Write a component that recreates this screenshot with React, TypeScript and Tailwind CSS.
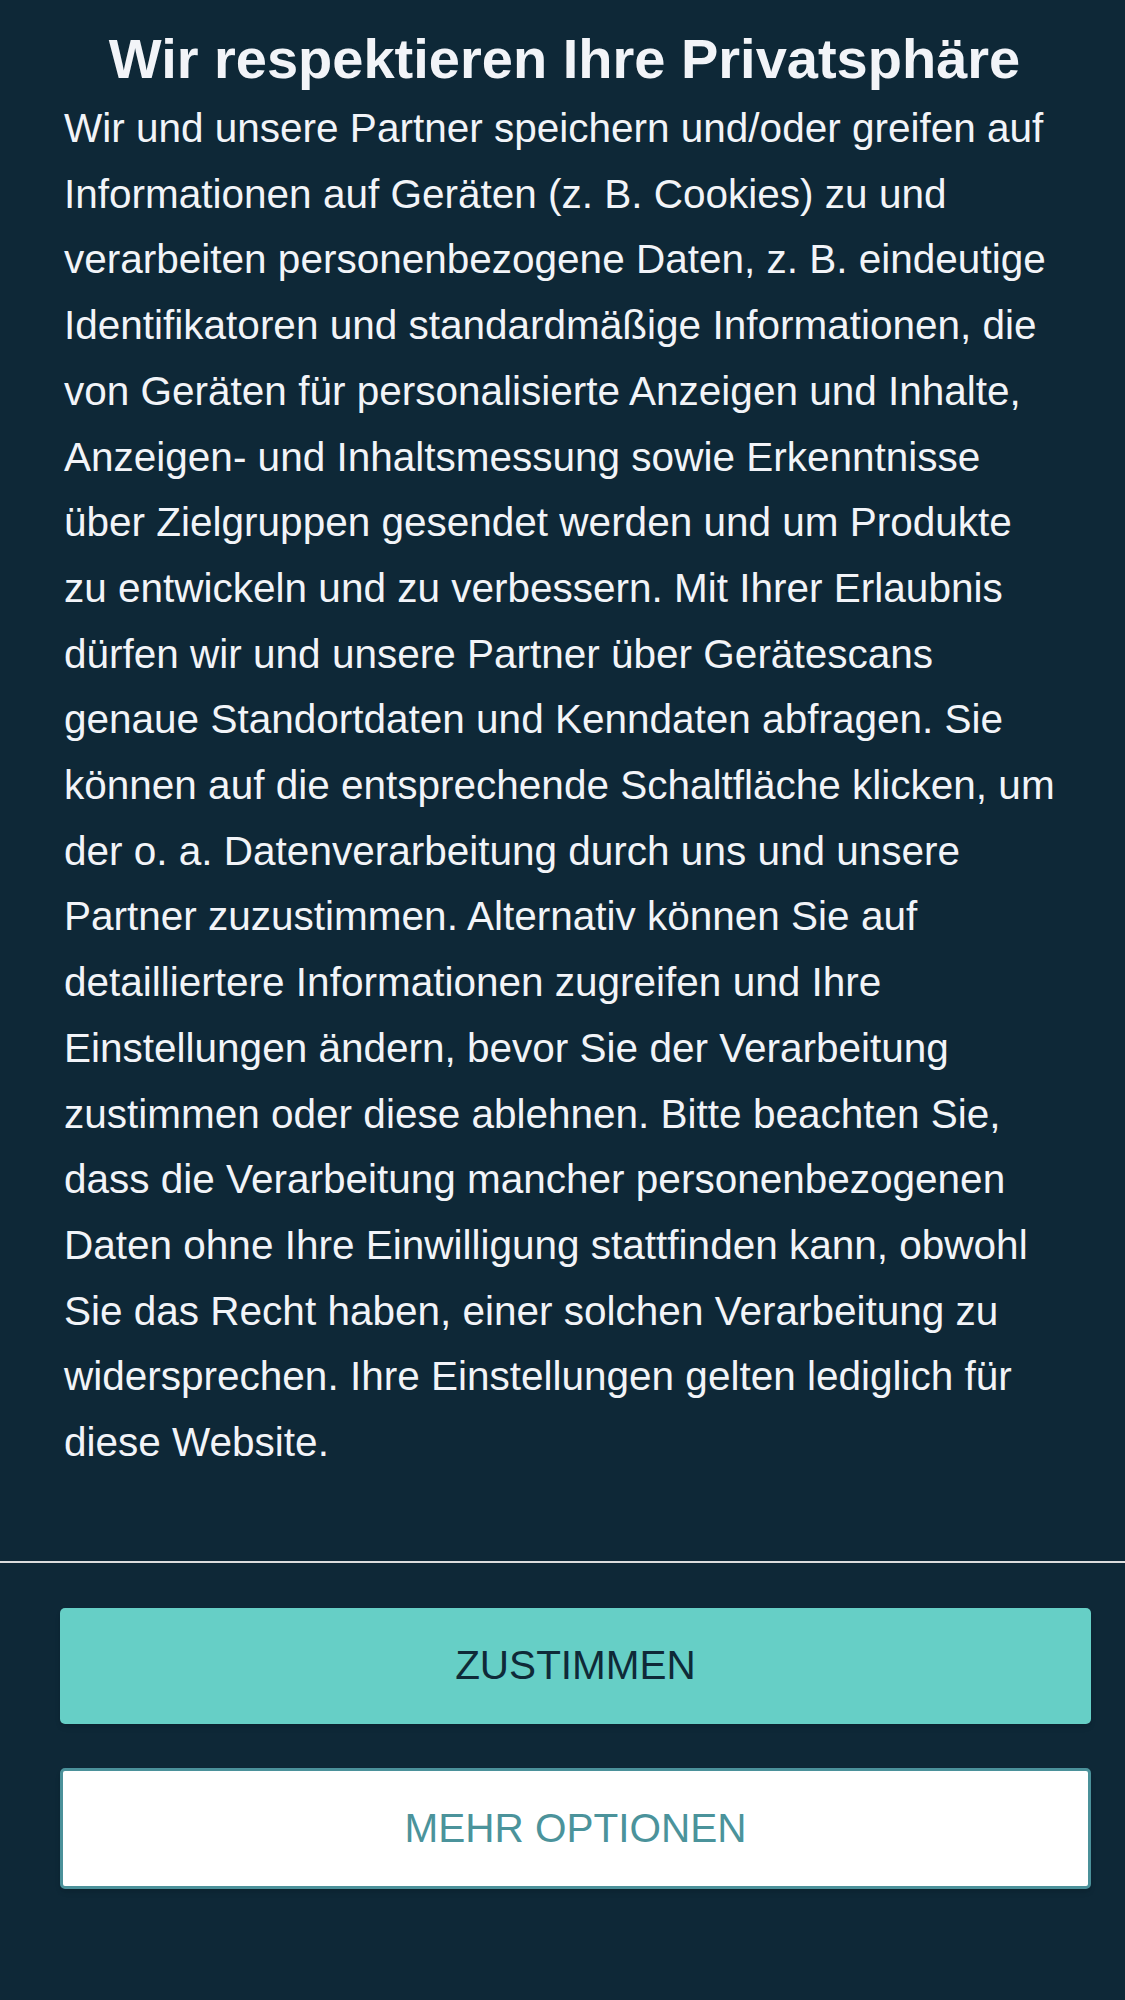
import React from "react";

const body =
  "Wir und unsere Partner speichern und/oder greifen auf Informationen auf Geräten (z. B. Cookies) zu und verarbeiten personenbezogene Daten, z. B. eindeutige Identifikatoren und standardmäßige Informationen, die von Geräten für personalisierte Anzeigen und Inhalte, Anzeigen- und Inhaltsmessung sowie Erkenntnisse über Zielgruppen gesendet werden und um Produkte zu entwickeln und zu verbessern. Mit Ihrer Erlaubnis dürfen wir und unsere Partner über Gerätescans genaue Standortdaten und Kenndaten abfragen. Sie können auf die entsprechende Schaltfläche klicken, um der o. a. Datenverarbeitung durch uns und unsere Partner zuzustimmen. Alternativ können Sie auf detailliertere Informationen zugreifen und Ihre Einstellungen ändern, bevor Sie der Verarbeitung zustimmen oder diese ablehnen. Bitte beachten Sie, dass die Verarbeitung mancher personenbezogenen Daten ohne Ihre Einwilligung stattfinden kann, obwohl Sie das Recht haben, einer solchen Verarbeitung zu widersprechen. Ihre Einstellungen gelten lediglich für diese Website.";

export default function App() {
  return (
    <div
      className="w-[1125px] h-[2000px] bg-[#0e2837] text-[#f2f4f8]"
      style={{ fontFamily: '"Liberation Sans", Arial, sans-serif' }}
    >
      {/* consent text */}
      <div className="pt-[27px] pl-[64px] pr-[60px]">
        <h1 className="text-center text-[56px] font-bold leading-[64px]">
          Wir respektieren Ihre Privatsphäre
        </h1>
        <p className="mt-[5px] text-[40.5px] leading-[65.7px]">{body}</p>
      </div>

      <div className="mt-[85px] h-[2px] bg-[#dcdcdc]" />

      {/* actions */}
      <div className="pt-[45px] pl-[60px] pr-[34px] flex flex-col gap-[44px]">
        <button className="h-[116px] w-full rounded-[5px] bg-[#66cfc6] text-[40.5px] text-[#0f2a38] shadow-md">
          ZUSTIMMEN
        </button>
        <button className="h-[121px] w-full rounded-[5px] border-[3px] border-[#4b919a] bg-white text-[40.5px] text-[#4b939b] shadow-md">
          MEHR OPTIONEN
        </button>
      </div>
    </div>
  );
}
